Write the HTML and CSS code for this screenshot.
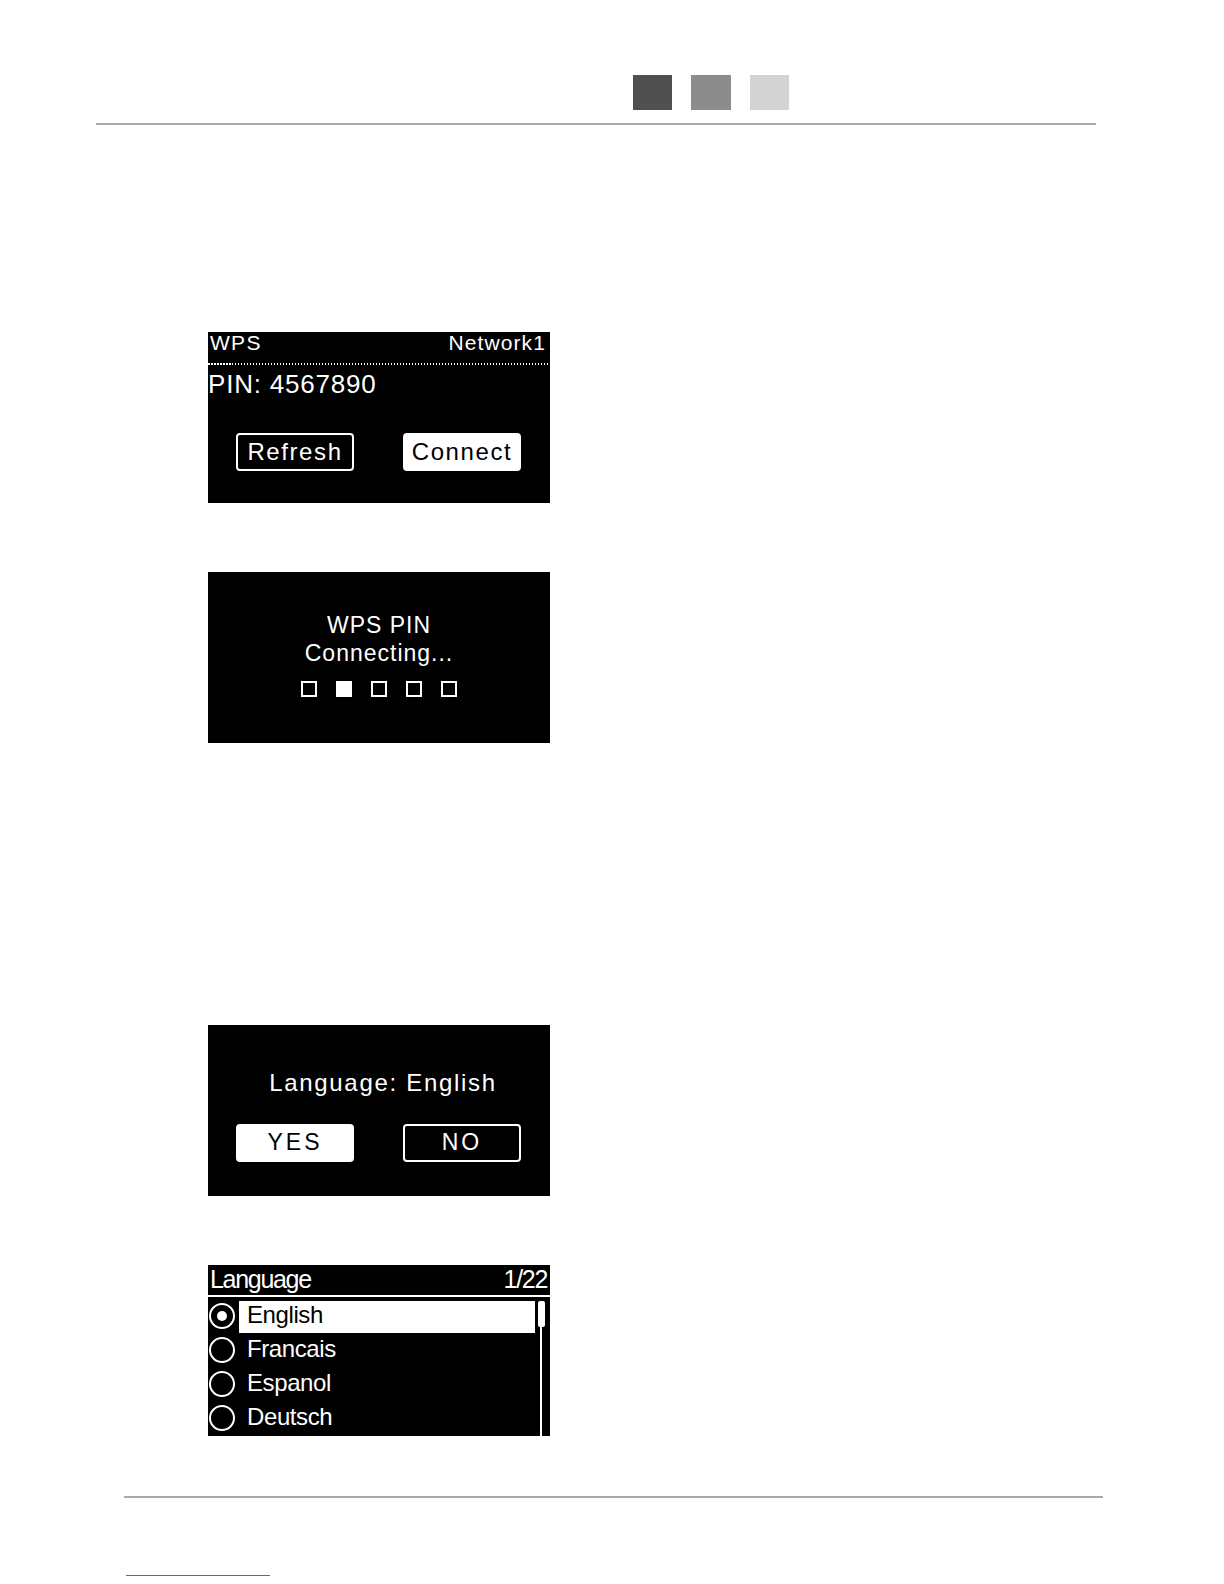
FILE: index.html
```html
<!DOCTYPE html>
<html>
<head>
<meta charset="utf-8">
<link rel="stylesheet" href="styles.css">
</head>
<body>
<div class="page">
  <header class="top">
    <div class="swatches">
      <span class="sw sw-dark"></span>
      <span class="sw sw-mid"></span>
      <span class="sw sw-light"></span>
    </div>
    <div class="rule rule-top"></div>
  </header>

  <main class="screens">
    <section class="screen s-wps">
      <div class="hdr">
        <span>WPS</span>
        <span>Network1</span>
      </div>
      <div class="dots"></div>
      <div class="pin">PIN: 4567890</div>
      <div class="btns">
        <div class="btn btn-outline">Refresh</div>
        <div class="btn btn-fill">Connect</div>
      </div>
    </section>

    <section class="screen s-connecting">
      <div class="msg">WPS PIN</div>
      <div class="msg">Connecting...</div>
      <div class="progress">
        <span class="pbox"></span>
        <span class="pbox on"></span>
        <span class="pbox"></span>
        <span class="pbox"></span>
        <span class="pbox"></span>
      </div>
    </section>

    <section class="screen s-confirm">
      <div class="question">Language:&nbsp;English</div>
      <div class="btns btns-yn">
        <div class="btn btn-fill yn">YES</div>
        <div class="btn btn-outline yn">NO</div>
      </div>
    </section>

    <section class="screen s-list">
      <div class="lhdr">
        <span>Language</span>
        <span>1/22</span>
      </div>
      <div class="lbody">
        <div class="list">
          <div class="row sel"><span class="radio checked"></span><span class="label">English</span></div>
          <div class="row"><span class="radio"></span><span class="label">Francais</span></div>
          <div class="row"><span class="radio"></span><span class="label">Espanol</span></div>
          <div class="row"><span class="radio"></span><span class="label">Deutsch</span></div>
        </div>
        <div class="scroll">
          <span class="thumb"></span>
          <span class="track"></span>
        </div>
      </div>
    </section>
  </main>

  <footer class="bottom">
    <div class="rule rule-bottom"></div>
    <div class="link-line"></div>
  </footer>
</div>
</body>
</html>
```
FILE: styles.css
```css
* { box-sizing: border-box; }
html, body { margin: 0; padding: 0; background: #fff; }
body { font-family: "Liberation Sans", Arial, sans-serif; }
.page { width: 1224px; height: 1584px; overflow: hidden; }

.top { padding-top: 75px; }
.swatches { display: flex; margin-left: 633px; gap: 19px; }
.sw { display: block; width: 39px; height: 35px; }
.sw-dark { background: #505050; }
.sw-mid { background: #8c8c8c; width: 40px; }
.sw-light { background: #d3d3d3; }

.rule { height: 2px; background: #a8a8a8; }
.rule-top { margin-top: 13px; margin-left: 96px; width: 1000px; }

.screens { margin-left: 208px; padding-top: 207px; }
.screen { width: 342px; height: 171px; background: #000; color: #fff; overflow: hidden; }
.s-connecting { margin-top: 69px; }
.s-confirm { margin-top: 282px; }
.s-list { margin-top: 69px; }

/* WPS screen */
.hdr { display: flex; justify-content: space-between; align-items: flex-start; height: 31px;
  padding: 0 4px 0 2px; font-size: 21px; line-height: 22px; letter-spacing: 1.3px; }
.hdr span:last-child { letter-spacing: 1.1px; }
.dots { height: 2px; background: repeating-linear-gradient(90deg, #fff 0 1.5px, transparent 1.5px 3px); }
.pin { margin-top: 6px; font-size: 26px; line-height: 26px; letter-spacing: 0.8px; padding-left: 0; }

.btns { display: flex; margin-top: 36px; padding-left: 28px; gap: 49px; }
.btn { width: 118px; height: 38px; border: 2px solid #fff; border-radius: 4px;
  font-size: 24px; line-height: 33px; text-align: center; letter-spacing: 1.6px; }
.btn-fill { background: #fff; color: #000; }
.btn-outline { background: #000; color: #fff; }

/* connecting */
.s-connecting { display: flex; flex-direction: column; align-items: center; padding-top: 39px; }
.msg { font-size: 23px; line-height: 28px; letter-spacing: 1px; }
.progress { display: flex; gap: 19px; margin-top: 14px; }
.pbox { display: block; width: 16px; height: 16px; border: 2px solid #fff; }
.pbox.on { background: #fff; }

/* confirm */
.s-confirm { padding-top: 46px; }
.question { font-size: 24px; line-height: 24px; letter-spacing: 1.7px; text-align: center; padding-left: 8px; }
.btns-yn { margin-top: 29px; }
.yn { font-size: 23px; letter-spacing: 3px; }

/* list */
.lhdr { display: flex; justify-content: space-between; height: 32px; padding: 2px 3px 0 2px;
  font-size: 25px; line-height: 25px; letter-spacing: -1.3px; border-bottom: 2px solid #fff; }
.lbody { display: flex; margin-top: 4px; height: 135px; }
.list { width: 327px; }
.row { display: flex; height: 34px; align-items: flex-start; }
.radio { display: block; width: 26px; height: 26px; margin: 2px 4px 0 1px; border: 2px solid #fff;
  border-radius: 50%; position: relative; flex: none; }
.radio.checked::after { content: ""; position: absolute; left: 6px; top: 6px; width: 10px; height: 10px;
  border-radius: 50%; background: #fff; }
.label { flex: 1; height: 32px; padding-left: 8px; font-size: 24px; line-height: 28px; letter-spacing: -0.4px; }
.row.sel .label { background: #fff; color: #000; }
.scroll { display: flex; flex-direction: column; align-items: center; width: 8px; margin-left: 2px; }
.thumb { display: block; width: 7px; height: 26px; background: #fff; border-radius: 2px; flex: none; }
.track { display: block; width: 2px; flex: 1; background: #fff; }

/* footer */
.bottom { padding-top: 60px; }
.rule-bottom { margin-left: 124px; width: 979px; }
.link-line { margin-top: 77px; margin-left: 126px; width: 144px; height: 1px; background: #4a66c8; }
```
